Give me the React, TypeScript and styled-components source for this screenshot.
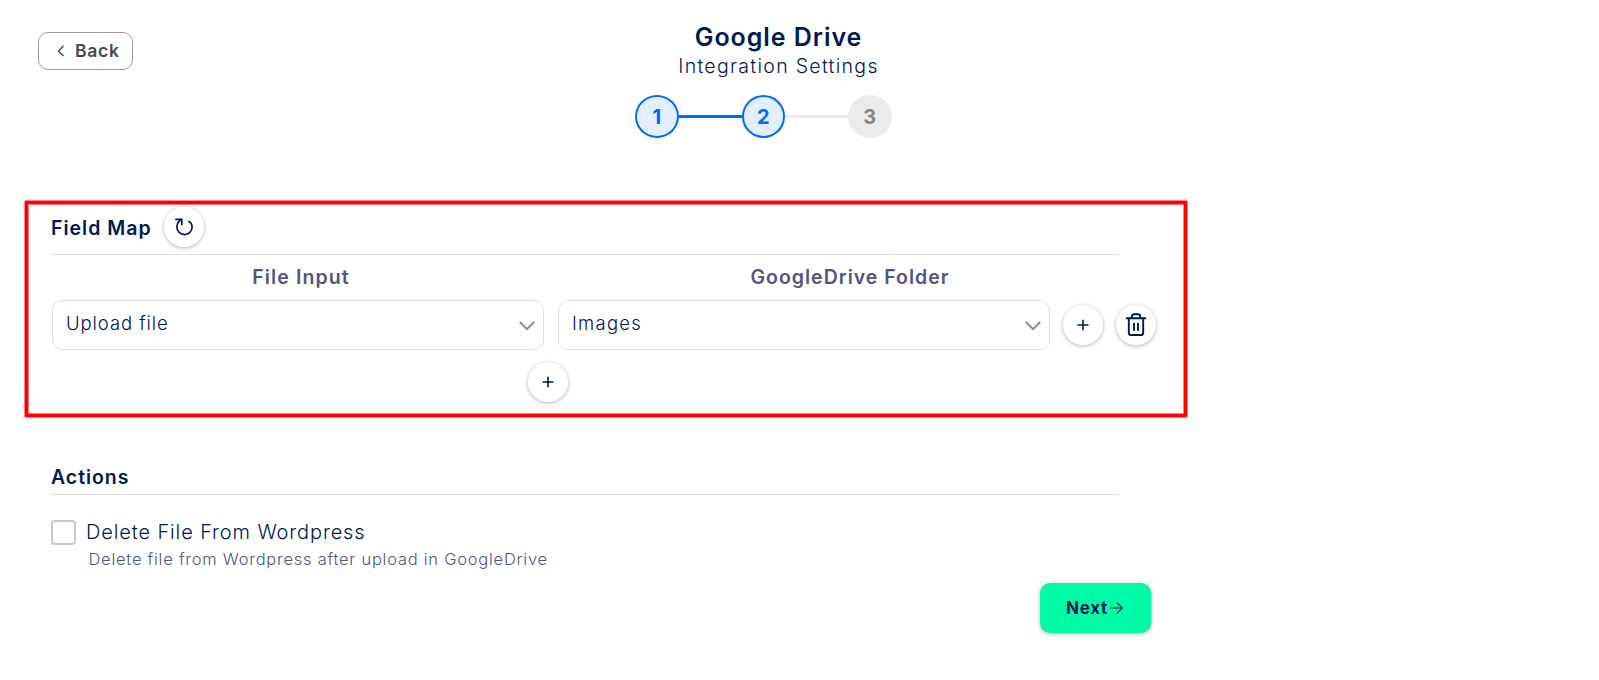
import React from "react";
import styled, { createGlobalStyle } from "styled-components";

const Global = createGlobalStyle`
  * { box-sizing: border-box; }
  body { margin: 0; background: #fff; }
  button { font: inherit; padding: 0; cursor: pointer; }
`;

const navy = "#00194f";
const slate = "#53547f";
const line = "#dfdfdf";

const Page = styled.div`
  width: 1599px;
  height: 680px;
  overflow: hidden;
  background: #fff;
  color: ${navy};
  font-family: Inter, "Liberation Sans", sans-serif;
`;

const Text = styled.span<{ $size: number; $weight?: number; $spacing?: number; $color?: string; $lh?: number }>`
  display: block;
  white-space: nowrap;
  font-size: ${(p) => p.$size}px;
  font-weight: ${(p) => p.$weight ?? 400};
  letter-spacing: ${(p) => p.$spacing ?? 0}px;
  line-height: ${(p) => p.$lh ?? 28}px;
  color: ${(p) => p.$color ?? "inherit"};
`;

const Header = styled.header`
  display: grid;
  grid-template-columns: 95px 1fr;
  width: 1386px;
  margin-left: 38px;
  padding-top: 22px;
`;

const BackButton = styled.button`
  display: flex;
  align-items: center;
  width: 95px;
  height: 38px;
  margin-top: 10px;
  padding-left: 18px;
  gap: 10px;
  border: 1px solid #9a9a9a;
  border-radius: 10px;
  background: #fff;
`;

const Titles = styled.div`
  display: flex;
  flex-direction: column;
  align-items: center;
`;

const Steps = styled.div`
  display: flex;
  align-items: center;
  margin: 15px 0 0 635px;
`;

const Step = styled.div<{ $active?: boolean }>`
  display: grid;
  place-items: center;
  width: 43.5px;
  height: 43px;
  border-radius: 50%;
  border: 2px solid ${(p) => (p.$active ? "#006aff" : "#ebebeb")};
  background: ${(p) => (p.$active ? "#e3efff" : "#ebebeb")};
  color: ${(p) => (p.$active ? "#006aff" : "#848484")};
`;

const Connector = styled.div<{ $active?: boolean }>`
  width: 63px;
  height: 3px;
  background: ${(p) => (p.$active ? "#006aff" : "#ebebeb")};
`;

const FieldMap = styled.section`
  width: 1162px;
  height: 216px;
  margin: 63px 0 0 25px;
  padding: 3px 23px 0;
  border: 3px solid #f00;
  border-radius: 1px;
  box-shadow: 0 0 0 1px #ff8080, inset 0 0 0 1px #ff8080;
`;

const SectionTitle = styled.div<{ $pad: number }>`
  display: flex;
  align-items: center;
  gap: 12px;
  width: 1067px;
  padding-bottom: ${(p) => p.$pad}px;
  border-bottom: 1px solid ${line};
`;

const RoundButton = styled.button`
  display: grid;
  place-items: center;
  flex: none;
  width: 40px;
  height: 40px;
  border: 0;
  border-radius: 50%;
  background: #fff;
  color: ${navy};
  box-shadow: 0 1px 4px rgba(0, 0, 0, 0.3);
`;

const ColumnHeads = styled.div`
  display: grid;
  grid-template-columns: 498px 600px;
  justify-items: center;
  margin: 8px 0 9px 1px;
`;

const MapRow = styled.div`
  display: flex;
  align-items: center;
  gap: 13px;
  margin-left: 1px;
`;

const Selects = styled.div`
  display: flex;
  gap: 14px;
`;

const Select = styled.div`
  display: flex;
  align-items: center;
  justify-content: space-between;
  width: 492px;
  height: 50px;
  padding: 0 8px 4px 13px;
  border: 1px solid ${line};
  border-radius: 10px;
`;

const AddRow = styled.div`
  width: 994px;
  padding: 12px 0 0 477px;
`;

const Actions = styled.section`
  margin: 46px 0 0 51px;
`;

const CheckRow = styled.label`
  display: flex;
  align-items: center;
  gap: 10px;
  margin-top: 25px;
  height: 25px;
`;

const CheckText = styled.div`
  padding-bottom: 2px;
`;

const Box = styled.span`
  width: 25px;
  height: 25px;
  border: 2px solid #c6c8d3;
  border-radius: 4px;
`;

const Hint = styled.div`
  margin: 2px 0 0 37.5px;
`;

const NextButton = styled.button`
  display: flex;
  align-items: center;
  width: 111px;
  height: 50px;
  margin: 12px 0 0 1040px;
  padding-left: 26px;
  gap: 2px;
  border: 0;
  border-radius: 10px;
  background: #00fba8;
  color: ${navy};
  box-shadow: 0 1px 4px rgba(0, 0, 0, 0.3);
`;

const TitleText = styled.div`
  padding-top: 2px;
`;

const Plus = () => (
  <svg width="12" height="12" viewBox="0 0 12 12" stroke="currentColor" strokeWidth="1.6">
    <path d="M6 .8v10.4M.5 6h11" />
  </svg>
);

const ChevronIcon = styled.svg`
  margin-top: 5px;
`;

const Chevron = () => (
  <ChevronIcon width="16" height="10" viewBox="0 0 16 10" fill="none" stroke="#8a8a8a" strokeWidth="2">
    <path d="M.8 1L8 8.200 15.200 1" />
  </ChevronIcon>
);

const Refresh = () => (
  <svg width="20" height="20" viewBox="0 0 20 20" fill="none" stroke="currentColor" strokeWidth="1.7">
    <path d="M1.200 2.300h6.600v6M7.600 2.500C4.500 4 2.900 6.800 2.900 10a7.600 7.600 0 0 0 15.200 0c0-2.500-1.400-4.700-3.800-6" />
  </svg>
);

const Trash = () => (
  <svg width="20" height="24" viewBox="0 0 20 24" fill="none" stroke="currentColor" strokeWidth="1.9">
    <path d="M0 5.200h20M2.800 5.200v14.800a2 2 0 0 0 2 2h10.400a2 2 0 0 0 2-2V5.200M5.800 5V3.300a2 2 0 0 1 2-2h4.400a2 2 0 0 1 2 2V5M8 10v7.800M12 10v7.800" />
  </svg>
);

export default function App() {
  return (
    <Page>
      <Global />
      <Header>
        <BackButton>
          <svg width="8" height="12" viewBox="0 0 8 12" fill="none" stroke="#4a4a4a" strokeWidth="1.5">
            <path d="M6.500 1L1.500 6l5 5" />
          </svg>
          <Text $size={17.500} $weight={600} $spacing={0.75} $color="#4a4a4a">Back</Text>
        </BackButton>
        <Titles>
          <Text $size={25} $weight={600} $spacing={0.95} $lh={30}>Google Drive</Text>
          <Text $size={19.500} $weight={300} $spacing={1.3}>Integration Settings</Text>
        </Titles>
      </Header>
      <Steps>
        <Step $active><Text $size={20} $weight={700}>1</Text></Step>
        <Connector $active />
        <Step $active><Text $size={20} $weight={700}>2</Text></Step>
        <Connector />
        <Step><Text $size={20} $weight={700}>3</Text></Step>
      </Steps>
      <FieldMap>
        <SectionTitle $pad={7}>
          <TitleText><Text $size={19.500} $weight={600} $spacing={1}>Field Map</Text></TitleText>
          <RoundButton aria-label="Refresh"><Refresh /></RoundButton>
        </SectionTitle>
        <ColumnHeads>
          <Text $size={19.500} $weight={600} $spacing={1.1} $color={slate}>File Input</Text>
          <Text $size={19.500} $weight={600} $spacing={1} $color={slate}>GoogleDrive Folder</Text>
        </ColumnHeads>
        <MapRow>
          <Selects>
            <Select><Text $size={18.500} $weight={300} $spacing={0.92}>Upload file</Text><Chevron /></Select>
            <Select><Text $size={18.500} $weight={300} $spacing={1.25}>Images</Text><Chevron /></Select>
          </Selects>
          <RoundButton aria-label="Add"><Plus /></RoundButton>
          <RoundButton aria-label="Delete"><Trash /></RoundButton>
        </MapRow>
        <AddRow><RoundButton aria-label="Add row"><Plus /></RoundButton></AddRow>
      </FieldMap>
      <Actions>
        <SectionTitle $pad={3}>
          <Text $size={19.500} $weight={600} $spacing={0.95}>Actions</Text>
        </SectionTitle>
        <CheckRow>
          <Box />
          <CheckText><Text $size={20} $weight={300} $spacing={0.88}>Delete File From Wordpress</Text></CheckText>
        </CheckRow>
        <Hint>
          <Text $size={16.500} $weight={300} $spacing={0.75} $lh={24} $color={slate}>Delete file from Wordpress after upload in GoogleDrive</Text>
        </Hint>
      </Actions>
      <NextButton>
        <Text $size={17} $weight={700} $spacing={0.7}>Next</Text>
        <svg width="13" height="12" viewBox="0 0 13 12" fill="none" stroke="currentColor" strokeWidth="1.100">
          <path d="M0 6h12M7 .7L12.200 6 7 11.300" />
        </svg>
      </NextButton>
    </Page>
  );
}
